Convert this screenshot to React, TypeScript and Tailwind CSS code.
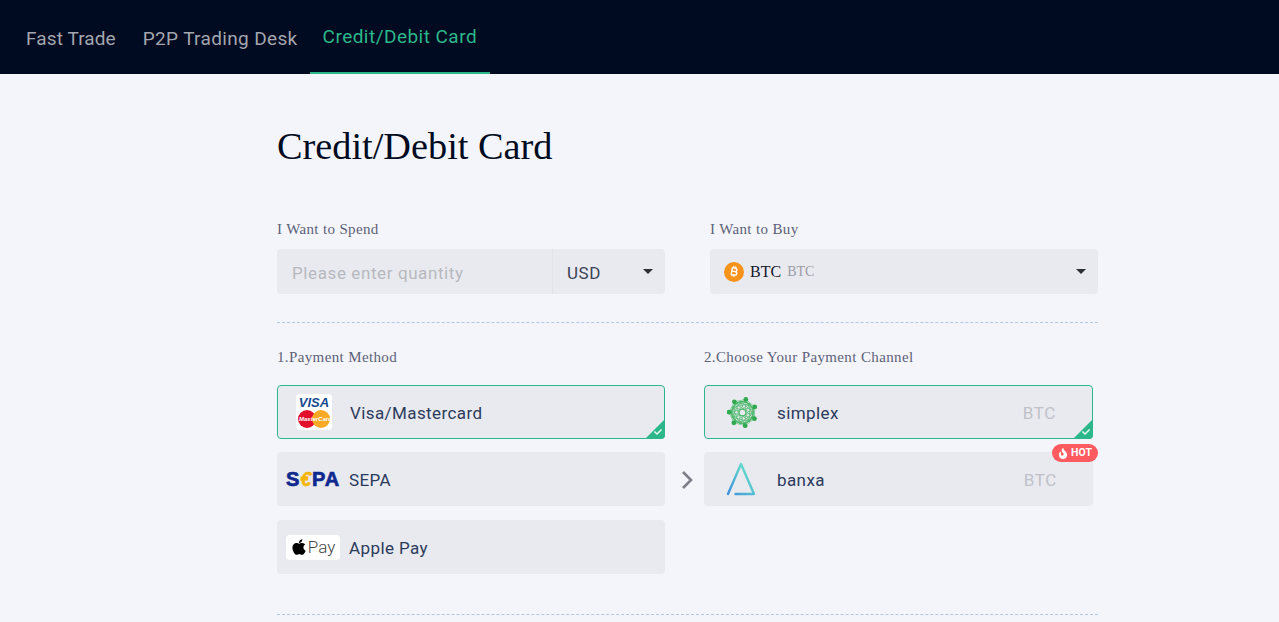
import { FaApple, FaFire, FaCheck } from 'react-icons/fa';
import { FaBitcoinSign } from 'react-icons/fa6';

const din = 'font-["Roboto",sans-serif]';
const serif = 'font-["Liberation_Serif",serif]';

function Caret() {
  return <span className="h-0 w-0 border-x-[5px] border-t-[5px] border-x-transparent border-t-[#2b2f36]" />;
}

function SelectedCorner() {
  return (
    <span className="absolute -bottom-px -right-px h-[20px] w-[20px]">
      <svg viewBox="0 0 20 20" className="h-full w-full">
        <path d="M20 0V16a4 4 0 0 1-4 4H0Z" fill="#2bb78a" />
      </svg>
      <FaCheck className="absolute bottom-[3px] right-[3px] h-[8px] w-[8px] text-[#e6f7f1]" />
    </span>
  );
}

function VisaLogo() {
  return (
    <span className="flex h-[36px] w-[36px] flex-col items-center rounded-sm bg-white pt-[2px]">
      <span className='font-["Liberation_Sans",sans-serif] text-[13px] leading-[13px] font-bold italic text-[#13498f]'>VISA</span>
      <span className="relative mt-[1px] flex h-[18px] w-[32px]">
        <span className="absolute left-0 top-0 h-[18px] w-[18px] rounded-full bg-[#e3102a]" />
        <span className="absolute right-0 top-0 h-[18px] w-[18px] rounded-full bg-[#f9a926]" />
        <span className='absolute left-[1px] top-[5px] font-["Liberation_Sans",sans-serif] text-[6px] leading-[8px] font-bold italic text-white'>MasterCard</span>
      </span>
    </span>
  );
}

function SepaLogo() {
  return (
    <span className='flex w-[55px] font-["Liberation_Sans",sans-serif] text-[20px] leading-none font-black tracking-[0.8px] text-[#10298e] [-webkit-text-stroke:0.7px_#10298e]'>
      S<span className="italic text-[#f5b50a] [-webkit-text-stroke:0.5px_#f5b50a]">€</span>PA
    </span>
  );
}

function ApplePayLogo() {
  return (
    <span className="flex h-[25px] w-[54px] items-center justify-center gap-[1px] rounded-sm bg-white">
      <FaApple className="h-[18px] w-[16px] text-black" />
      <span className='font-["Roboto",sans-serif] text-[17px] leading-none font-light text-[#444]'>Pay</span>
    </span>
  );
}

const heptagon = (radius: number, offset: number) =>
  Array.from({ length: 7 }).map((_, i) => {
    const a = -Math.PI / 2 + offset + (i * 2 * Math.PI) / 7;
    return [15 + radius * Math.cos(a), 15 + radius * Math.sin(a)];
  });

const simplexNodes = heptagon(13, 0.25);
const simplexInner = heptagon(11, 0.7);

function SimplexLogo() {
  return (
    <svg viewBox="0 0 30 30" className="ml-[2px] h-[31px] w-[31px]">
      {[simplexNodes, simplexInner].map((pts, k) =>
        pts.map(([x, y], i) =>
          pts.map(([x2, y2], j) =>
            j > i ? <line key={`${k}-${i}-${j}`} x1={x} y1={y} x2={x2} y2={y2} stroke="#4cb86b" strokeWidth="0.6" /> : null,
          ),
        ),
      )}
      <circle cx="15" cy="15" r="10.5" fill="none" stroke="#4cb86b" strokeWidth="1.2" />
      <circle cx="15" cy="15" r="3.2" fill="#e9eaef" stroke="#4cb86b" strokeWidth="1" />
      {simplexNodes.map(([x, y], i) => (
        <circle key={i} cx={x} cy={y} r="2.3" fill="#2fa84f" />
      ))}
    </svg>
  );
}

function BanxaLogo() {
  return (
    <svg viewBox="0 0 30 34" className="h-[34px] w-[30px]">
      <defs>
        <linearGradient id="banxa" x1="0" y1="1" x2="1" y2="0">
          <stop offset="0" stopColor="#3d8fdc" />
          <stop offset="0.7" stopColor="#62d3cc" />
        </linearGradient>
      </defs>
      <path d="M2 32 15 2 28 32H9.5" fill="none" stroke="url(#banxa)" strokeWidth="2.4" strokeLinecap="round" strokeLinejoin="round" />
    </svg>
  );
}

function MethodCard({ logo, name, selected, logoClass }: { logo: React.ReactNode; name: string; selected?: boolean; logoClass: string }) {
  return (
    <div className={`relative flex h-[54px] items-center rounded bg-[#e9eaef] ${selected ? 'border border-[#2bb78a]' : ''}`}>
      <span className={`flex justify-center ${logoClass}`}>{logo}</span>
      <span className={`${din} pt-[4px] text-[17px] tracking-[0.4px] text-[#2b3a5c]`}>{name}</span>
      {selected && <SelectedCorner />}
    </div>
  );
}

function ChannelCard({ logo, name, selected, children }: { logo: React.ReactNode; name: string; selected?: boolean; children?: React.ReactNode }) {
  return (
    <div className={`relative flex h-[54px] items-center rounded bg-[#e9eaef] ${selected ? 'border border-[#2bb78a]' : ''}`}>
      <span className={`flex justify-center ${selected ? 'w-[72px]' : 'w-[73px]'}`}>{logo}</span>
      <span className={`${din} pt-[4px] text-[17px] tracking-[0.4px] text-[#2b3a5c]`}>{name}</span>
      <span className={`${din} ml-auto mr-[36px] pt-[4px] text-[17px] tracking-[0.6px] text-[#bfc1c9]`}>BTC</span>
      {children}
    </div>
  );
}

export default function App() {
  return (
    <div className="min-h-[622px] overflow-hidden bg-[#f4f5fa]">
      <header className={`${din} flex h-[74px] bg-[#000a20] pl-[13px] text-[19px]`}>
        <a className="flex h-full items-center pl-[13px] pr-[14px] pt-[4px] tracking-[0.1px] text-[#a3a6ae]">Fast Trade</a>
        <a className="flex h-full items-center pl-[13px] pr-[12px] pt-[4px] tracking-[0.35px] text-[#a3a6ae]">P2P Trading Desk</a>
        <a className="flex h-full items-center border-b-2 border-[#2bb78a] px-[13px] pt-[3px] tracking-[0.47px] text-[#2bb78a]">Credit/Debit Card</a>
      </header>

      <main className="ml-[277px] w-[821px]">
        <h1 className={`${serif} pt-[50px] text-[38.3px] leading-[44px] text-[#000a20]`}>Credit/Debit Card</h1>

        <div className="mt-[51px] grid grid-cols-[388px_388px] gap-x-[45px]">
          <div>
            <p className={`${serif} text-[15px] leading-[20px] tracking-[0.35px] text-[#5c6178]`}>I Want to Spend</p>
            <div className="mt-[10px] flex h-[45px] rounded bg-[#e9eaef]">
              <span className={`${din} flex w-[276px] items-center border-r border-[#e2e3e8] pl-[15px] pt-[4px] text-[17px] tracking-[0.6px] text-[#b7b9bf]`}>
                Please enter quantity
              </span>
              <span className={`${din} flex flex-1 items-center justify-between pl-[14px] pr-[12px] pt-[4px] text-[17px] tracking-[0.6px] text-[#3a4256]`}>
                USD
                <span className="mb-[4px] flex"><Caret /></span>
              </span>
            </div>
          </div>
          <div>
            <p className={`${serif} text-[15px] leading-[20px] tracking-[0.35px] text-[#5c6178]`}>I Want to Buy</p>
            <div className="mt-[10px] flex h-[45px] items-center rounded bg-[#e9eaef] pl-[14px] pr-[12px]">
              <span className="flex h-[20px] w-[20px] items-center justify-center rounded-full bg-[#f7931a]">
                <FaBitcoinSign className="h-[11px] w-[11px] rotate-12 text-white" />
              </span>
              <span className={`${serif} ml-[6px] text-[16px] text-[#14182a]`}>BTC</span>
              <span className={`${serif} ml-[6px] text-[14px] text-[#9a9ca6]`}>BTC</span>
              <span className="ml-auto flex"><Caret /></span>
            </div>
          </div>
        </div>

        <div className="mt-[28px] border-t border-dashed border-[#b4c7e0]" />

        <div className="mt-[24px] flex">
          <div className="w-[388px]">
            <p className={`${serif} h-[20px] text-[15px] leading-[20px] tracking-[0.37px] text-[#5c6178]`}>1.Payment Method</p>
            <div className="mt-[18px] flex flex-col gap-[13px]">
              <MethodCard selected logo={<VisaLogo />} name="Visa/Mastercard" logoClass="w-[72px]" />
              <MethodCard logo={<SepaLogo />} name="SEPA" logoClass="w-[72px] pl-[1px]" />
              <div className="mt-px">
                <MethodCard logo={<ApplePayLogo />} name="Apple Pay" logoClass="w-[72px]" />
              </div>
            </div>
          </div>

          <div className="flex w-[39px] items-center justify-center pl-[5px]">
            <svg viewBox="0 0 12 20" className="mt-[39px] h-[20px] w-[12px]">
              <path d="M2 2l8 8-8 8" fill="none" stroke="#7c7f88" strokeWidth="2.6" />
            </svg>
          </div>

          <div className="w-[389px]">
            <p className={`${serif} h-[20px] text-[15px] leading-[20px] tracking-[0.37px] text-[#5c6178]`}>2.Choose Your Payment Channel</p>
            <div className="mt-[18px] flex flex-col gap-[13px]">
              <ChannelCard selected logo={<SimplexLogo />} name="simplex">
                <SelectedCorner />
              </ChannelCard>
              <ChannelCard logo={<BanxaLogo />} name="banxa">
                <span className={`${din} absolute -right-[5px] -top-[8px] flex h-[18px] w-[46px] items-center justify-center gap-[3px] rounded-full bg-[#ff5a5f] text-[10.5px] font-bold text-white`}>
                  <FaFire className="h-[11px] w-[10px]" />
                  HOT
                </span>
              </ChannelCard>
            </div>
          </div>
        </div>

        <div className="mt-[40px] border-t border-dashed border-[#b4c7e0]" />
      </main>
    </div>
  );
}
